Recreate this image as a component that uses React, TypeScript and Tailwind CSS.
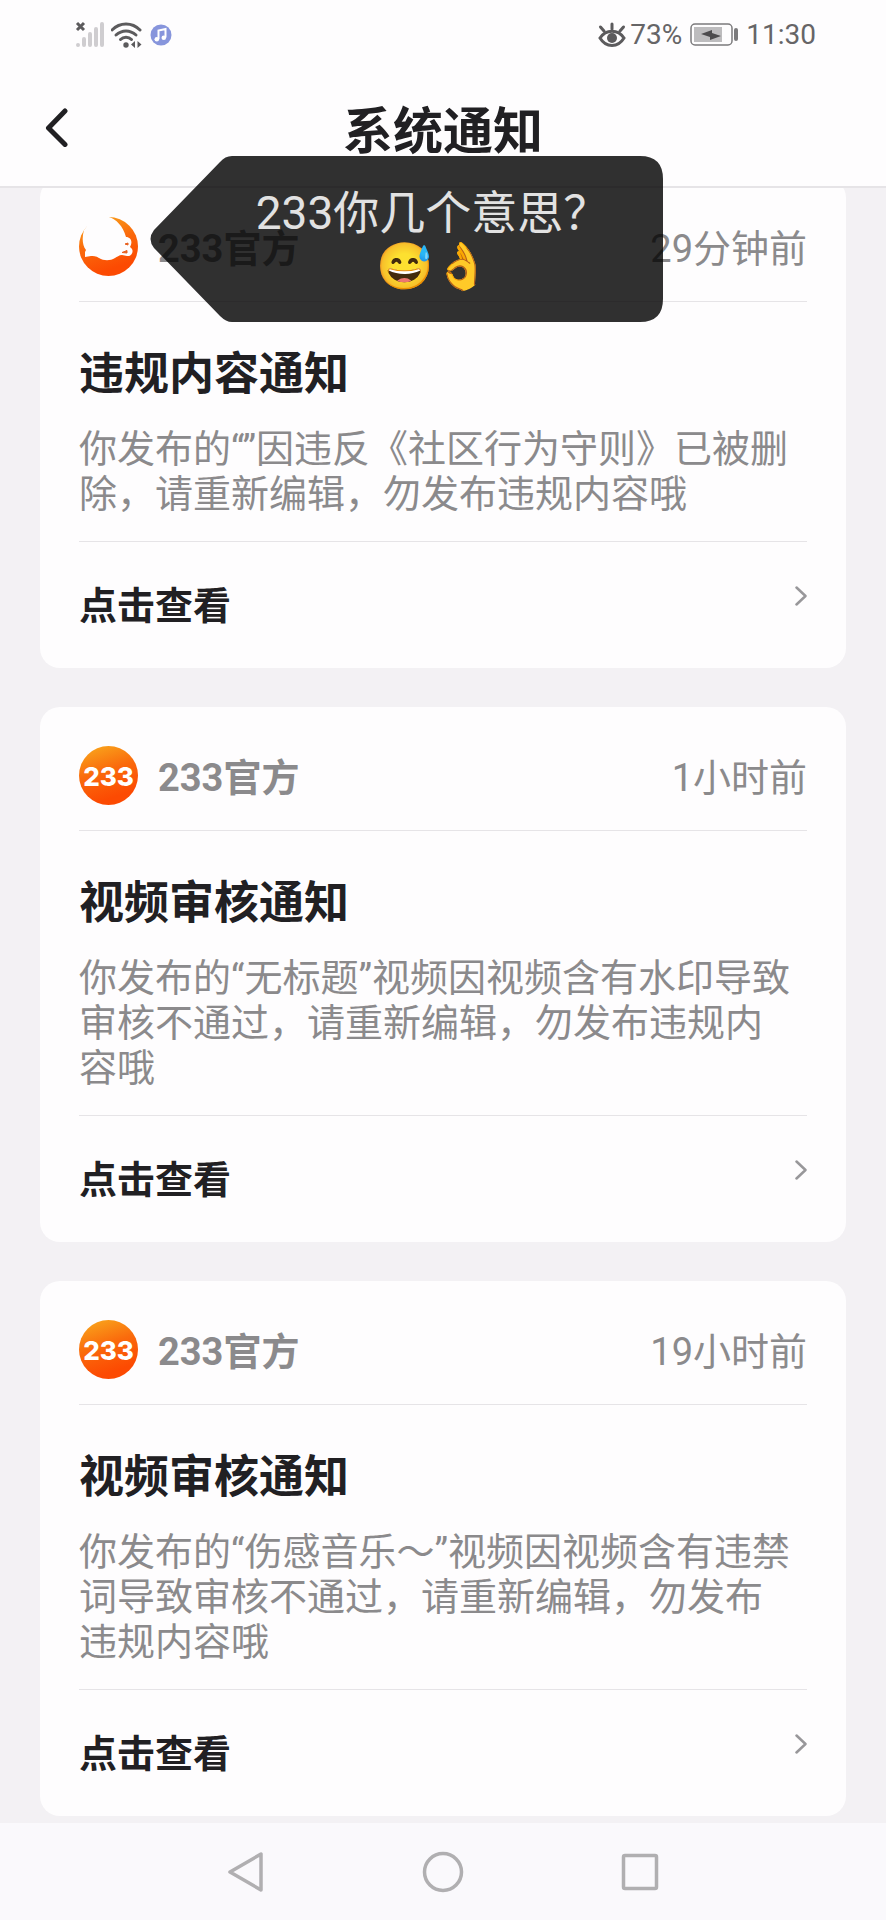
import { useId } from "react";

type Notice = {
  title: string;
  body: string;
  time: string;
  scribbled?: boolean;
};

const NOTICES: Notice[] = [
  {
    title: "违规内容通知",
    body: "你发布的“”因违反《社区行为守则》已被删除，请重新编辑，勿发布违规内容哦",
    time: "29分钟前",
    scribbled: true,
  },
  {
    title: "视频审核通知",
    body: "你发布的“无标题”视频因视频含有水印导致审核不通过，请重新编辑，勿发布违规内容哦",
    time: "1小时前",
  },
  {
    title: "视频审核通知",
    body: "你发布的“伤感音乐～”视频因视频含有违禁词导致审核不通过，请重新编辑，勿发布违规内容哦",
    time: "19小时前",
  },
];

function StatusBar() {
  return (
    <div className="flex h-[70px] items-center justify-between pl-[75px] pr-[70px] text-[28px] leading-8 text-[#666567]">
      <div className="flex items-center">
        <svg className="h-7 w-8" viewBox="0 0 32 28" fill="none">
          <path d="M2 2l7 7M9 2L2 9" stroke="#5c5b5d" strokeWidth="3" />
          <g stroke="#cfcdd0" strokeWidth="4" strokeLinecap="round">
            <path d="M3 24v0M9 24v-6M15 24V13M21 24V8M27 24V3" />
          </g>
        </svg>
        <svg className="ml-1 h-7 w-8" viewBox="0 0 32 28" fill="none" stroke="#5c5b5d" strokeLinecap="round">
          <path d="M1 9C9 1 21 1 29 9" strokeWidth="3" />
          <path d="M5 14c6-5.500 14-5.500 20 0" strokeWidth="3" />
          <path d="M9.500 18.500c3-3 8-3 11 0" strokeWidth="3" />
          <circle cx="15" cy="24" r="2.700" fill="#5c5b5d" stroke="none" />
          <path d="M24 20v7l-4-3.500zM26.500 20v7l4-3.500z" fill="#5c5b5d" stroke="none" />
        </svg>
        <svg className="ml-1.5 h-6 w-6" viewBox="0 0 24 24">
          <circle cx="12" cy="12" r="10.500" fill="#8795dc" />
          <path d="M9.500 16V7.500l7-1.500v8.500" fill="none" stroke="#fff" strokeWidth="2" />
          <circle cx="7.800" cy="16.300" r="2.300" fill="#fff" />
          <circle cx="14.800" cy="14.800" r="2.300" fill="#fff" />
        </svg>
      </div>
      <div className="flex items-center">
        <svg className="h-7 w-7" viewBox="0 0 28 28" fill="none" stroke="#5c5b5d" strokeWidth="3" strokeLinecap="round">
          <path d="M2 17C8 8 20 8 26 17C20 27 8 27 2 17z" />
          <path d="M14 8V3M6 10L2.500 6M22 10l3.500-4" />
          <circle cx="14" cy="17" r="5" fill="#5c5b5d" stroke="none" />
        </svg>
        <span className="ml-1">73%</span>
        <svg className="ml-2 h-6 w-12" viewBox="0 0 48 24">
          <rect x="1" y="1" width="41" height="21" rx="4" fill="none" stroke="#7b7a7c" strokeWidth="1.500" />
          <rect x="4" y="4" width="28" height="15" fill="#bdbcbe" />
          <path d="M11 11l11-4v3l9 3-11 4v-3z" fill="#4c4b4d" />
          <rect x="44" y="5" width="4" height="13" rx="2" fill="#7b7a7c" />
        </svg>
        <span className="ml-2">11:30</span>
      </div>
    </div>
  );
}

function Avatar({ scribbled }: { scribbled?: boolean }) {
  const id = useId();
  return (
    <svg className="h-[60px] w-[60px] shrink-0" viewBox="0 0 60 60" role="img" aria-label="233">
      <defs>
        <linearGradient id={id} x1="0.2" y1="0" x2="0.5" y2="0.9">
          <stop offset="0" stopColor="#f9a51c" />
          <stop offset="0.5" stopColor="#fa6a0c" />
          <stop offset="1" stopColor="#fc4a02" />
        </linearGradient>
      </defs>
      <circle cx="29.500" cy="29.500" r="29.500" fill={`url(#${id})`} />
      {scribbled ? (
        <>
          <path
            d="M30 0C37 2 44 9 47 20C52 20 54 25 51 30C56 33 53 40 48 39L43 38C40 38 38 40 36 41C31 44 25 44 20 41C17 39 14 39 12 39L6 40V35L7 33C3 28 3 20 5 13L8 9L0 8V-2H30z"
            fill="#fefdfe"
          />
          <path d="M46 27l3-1v2zM43 35.500l5-2v2.500z" fill="#e8601f" stroke="#e8601f" />
        </>
      ) : (
        <text
          x="29.500"
          y="39.500"
          textAnchor="middle"
          fill="#fff"
          fontSize="26"
          fontWeight="800"
          fontFamily="Inter, sans-serif"
        >
          233
        </text>
      )}
    </svg>
  );
}

function NoticeCard({ notice }: { notice: Notice }) {
  return (
    <article className="rounded-[20px] bg-[#fefdfe] px-[39px] pt-[39px]">
      <div className="flex items-start border-b border-[#e6e4e7] pb-5 text-[38px] leading-[64px] text-[#8b8a8c]">
        <Avatar scribbled={notice.scribbled} />
        <span className="ml-[19px] font-bold">233官方</span>
        <time className="ml-auto">{notice.time}</time>
      </div>
      <h2 className="mt-[45px] text-[45px] font-bold leading-[56px] text-[#212023]">{notice.title}</h2>
      <p className="mt-6 border-b border-[#e6e4e7] pb-6 pr-2 text-[38px] leading-[45px] text-[#8b8a8c]">
        {notice.body}
      </p>
      <a href="#" className="flex h-[126px] items-center justify-between pt-0.5 text-[38px] font-bold text-[#212023]">
        点击查看
        <svg
          className="mb-5 h-5 w-3"
          viewBox="0 0 12 20"
          fill="none"
          stroke="#98979a"
          strokeWidth="2.500"
          strokeLinecap="round"
          strokeLinejoin="round"
        >
          <path d="M1.500 1.500L10.500 10l-9 8.500" />
        </svg>
      </a>
    </article>
  );
}

function SpeechBubble() {
  return (
    <div className="absolute left-[150px] top-[156px] z-20 h-[166px] w-[513px]">
      <svg className="absolute inset-0 h-full w-full" viewBox="0 0 513 166" fill="#000" fillOpacity="0.81">
        <path d="M82 0H490Q513 0 513 23V143Q513 166 490 166H82Q76 166 70 160L4 92Q-3 83 4 74L70 6Q75 0 82 0z" />
      </svg>
      <p className="relative pl-[52px] pt-[31px] text-center text-[46px] leading-[53px] text-[#e2e2e2]">
        233你几个意思？
        <br />
        😅👌
      </p>
    </div>
  );
}

export default function App() {
  return (
    <div className="relative flex min-h-screen flex-col bg-[#f3f1f4] font-[Roboto,'Noto_Sans_CJK_SC',sans-serif]">
      <header className="relative z-10 border-b-2 border-[#e6e4e7] bg-[#fefdfe]">
        <StatusBar />
        <div className="relative flex h-[116px] items-center justify-center pt-2">
          <button type="button" aria-label="返回" className="absolute left-[44px] top-[37px]">
            <svg
              className="h-10 w-6"
              viewBox="0 0 24 40"
              fill="none"
              stroke="#212023"
              strokeWidth="5"
              strokeLinecap="round"
              strokeLinejoin="round"
            >
              <path d="M21 4L4.500 21L21 37.500" />
            </svg>
          </button>
          <h1 className="text-[50px] font-bold leading-[60px] text-[#212023]">系统通知</h1>
        </div>
      </header>

      <main className="-mt-[10px] flex flex-1 flex-col gap-[39px] px-10 pb-[7px]">
        {NOTICES.map((notice) => (
          <NoticeCard key={notice.time} notice={notice} />
        ))}
      </main>

      <nav className="bg-[#faf9fc]">
        <div className="mx-auto grid h-[97px] w-2/3 grid-cols-3 place-items-center">
          <button type="button" aria-label="后退">
            <svg className="h-11 w-11" viewBox="0 0 44 44" fill="none" stroke="#b0afb1" strokeWidth="3.500" strokeLinejoin="round">
              <path d="M37 4V40L6 22z" />
            </svg>
          </button>
          <button type="button" aria-label="主屏幕">
            <svg className="h-11 w-11" viewBox="0 0 44 44" fill="none" stroke="#b0afb1" strokeWidth="3.500">
              <circle cx="22" cy="22" r="18.500" />
            </svg>
          </button>
          <button type="button" aria-label="最近任务">
            <svg className="h-11 w-11" viewBox="0 0 44 44" fill="none" stroke="#b0afb1" strokeWidth="3.500">
              <rect x="5.500" y="5.500" width="33" height="33" rx="1.500" />
            </svg>
          </button>
        </div>
      </nav>

      <SpeechBubble />
    </div>
  );
}
